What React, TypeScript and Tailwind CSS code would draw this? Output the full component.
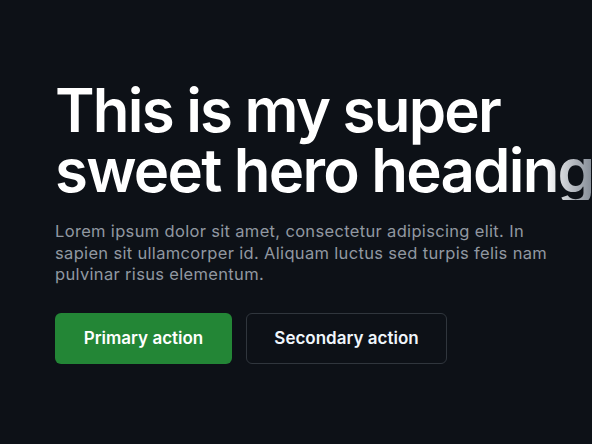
import React from "react";

const App: React.FunctionComponent = () => {
  return (
    <div className="min-h-screen w-full overflow-hidden bg-[#0d1117] flex items-center font-['Inter','Liberation_Sans',sans-serif]">
      <div className="pl-[55px] w-full">
        <h1 className="w-[570px] text-[60px] leading-[60px] font-semibold tracking-[-0.03em] text-transparent bg-clip-text bg-[linear-gradient(90deg,#ffffff_0px,#ffffff_490px,#7d8590_540px)]">
          This is my super sweet hero heading
        </h1>
        <p className="mt-[21px] w-[500px] text-[16.5px] leading-[21.5px] tracking-[0.02em] text-[#9198a1]">
          Lorem ipsum dolor sit amet, consectetur adipiscing elit. In sapien sit
          ullamcorper id. Aliquam luctus sed turpis felis nam pulvinar risus
          elementum.
        </p>
        <div className="mt-[27px] flex gap-[14px]">
          <button className="w-[177px] h-[51px] rounded-[6px] bg-[#238636] text-white text-[17px] font-semibold">
            Primary action
          </button>
          <button className="w-[201px] h-[51px] rounded-[6px] border border-[#30363d] text-[#f0f6fc] text-[17px] font-semibold">
            Secondary action
          </button>
        </div>
      </div>
    </div>
  );
};

export default App;
